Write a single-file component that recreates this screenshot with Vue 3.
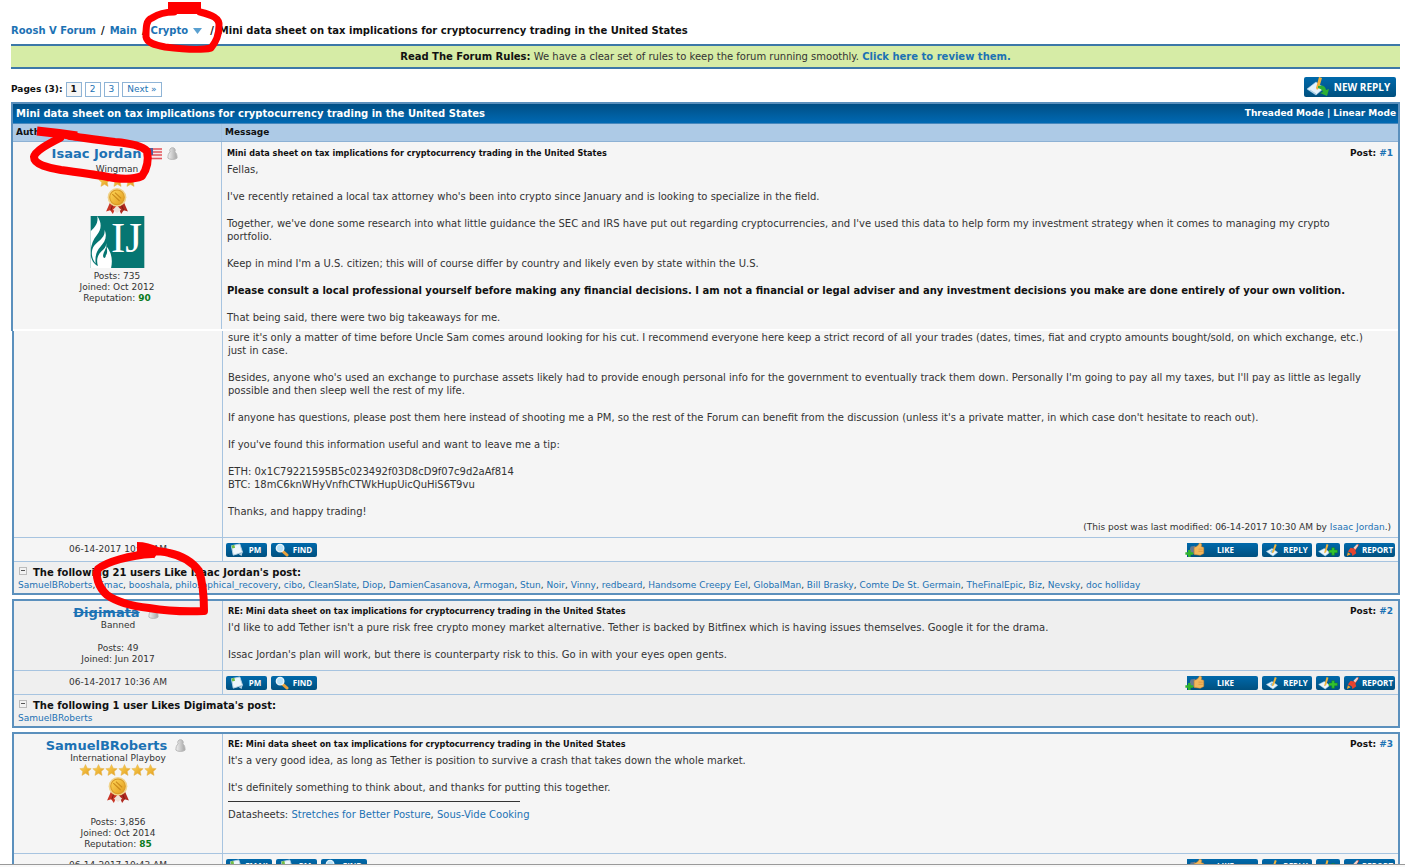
<script setup>
const threadTitle = 'Mini data sheet on tax implications for cryptocurrency trading in the United States'

const openingParagraphs = [
  { text: 'Fellas,' },
  { text: "I've recently retained a local tax attorney who's been into crypto since January and is looking to specialize in the field." },
  { text: "Together, we've done some research into what little guidance the SEC and IRS have put out regarding cryptocurrencies, and I've used this data to help form my investment strategy when it comes to managing my crypto portfolio." },
  { text: "Keep in mind I'm a U.S. citizen; this will of course differ by country and likely even by state within the U.S." },
  { text: 'Please consult a local professional yourself before making any financial decisions. I am not a financial or legal adviser and any investment decisions you make are done entirely of your own volition.', strong: true },
  { text: 'That being said, there were two big takeaways for me.' },
]

const closingParagraphs = [
  "sure it's only a matter of time before Uncle Sam comes around looking for his cut. I recommend everyone here keep a strict record of all your trades (dates, times, fiat and crypto amounts bought/sold, on which exchange, etc.) just in case.",
  "Besides, anyone who's used an exchange to purchase assets likely had to provide enough personal info for the government to eventually track them down. Personally I'm going to pay all my taxes, but I'll pay as little as legally possible and then sleep well the rest of my life.",
  "If anyone has questions, please post them here instead of shooting me a PM, so the rest of the Forum can benefit from the discussion (unless it's a private matter, in which case don't hesitate to reach out).",
  "If you've found this information useful and want to leave me a tip:",
  'ETH: 0x1C79221595B5c023492f03D8cD9f07c9d2aAf814\nBTC: 18mC6knWHyVnfhCTWkHupUicQuHiS6T9vu',
  'Thanks, and happy trading!',
]

const likers = ['SamuelBRoberts', 'Emac', 'booshala', 'philosophical_recovery', 'cibo', 'CleanSlate', 'Diop', 'DamienCasanova', 'Armogan', 'Stun', 'Noir', 'Vinny', 'redbeard', 'Handsome Creepy Eel', 'GlobalMan', 'Bill Brasky', 'Comte De St. Germain', 'TheFinalEpic', 'Biz', 'Nevsky', 'doc holliday']

const contact = [
  { label: 'PM', icon: 'i-note', size: 'w-pm' },
  { label: 'FIND', icon: 'i-find', size: 'w-find' },
]
const contactWithEmail = [{ label: 'EMAIL', icon: 'i-note', size: 'w-find' }, ...contact]
const actions = [
  { label: 'LIKE', icon: 'i-like', size: 'w-like' },
  { label: 'REPLY', icon: 'i-reply', size: 'w-reply' },
  { label: '', icon: 'i-multi', size: 'w-multi' },
  { label: 'REPORT', icon: 'i-report', size: 'w-report' },
]
</script>

<template>
  <div class="page">
    <svg class="defs" aria-hidden="true">
      <defs>
        <linearGradient id="gold" x1="0" y1="0" x2="1" y2="1"><stop offset="0" stop-color="#ffd85a" /><stop offset="1" stop-color="#e09a1c" /></linearGradient>
        <linearGradient id="grey" x1="0" y1="0" x2="1" y2="0"><stop offset="0" stop-color="#f0f0f0" /><stop offset="1" stop-color="#a4a4a4" /></linearGradient>
      </defs>
      <symbol id="i-star" viewBox="0 0 24 24"><path d="M12 1l3.400 7.400 8 .900-6 5.500 1.700 8L12 18.700l-7.100 4.100 1.700-8-6-5.500 8-.900z" fill="url(#gold)" stroke="#e3b04a" stroke-width="1" /></symbol>
      <symbol id="i-medal" viewBox="0 0 44 50">
        <path d="M9 27L1 45l8-2 5 7 7-16z" fill="#c93526" /><path d="M35 27l8 18-8-2-5 7-7-16z" fill="#b02a20" />
        <path d="M14 32l-4 11M30 32l5 11" stroke="#7d1c16" stroke-width="2" />
        <path d="M22 34l-8 8 8 6 8-6z" fill="#efe0d8" />
        <circle cx="22" cy="18" r="18" fill="#f1d38a" /><circle cx="22" cy="18" r="14" fill="url(#gold)" stroke="#d99a25" stroke-width="2" />
        <path d="M13 12l14 13M18 9l12 11" fill="none" stroke="#c98819" stroke-width="2" />
      </symbol>
      <symbol id="i-user" viewBox="0 0 12 14"><path d="M6 .6a3 3 0 0 1 2.500 4.700C10.500 6.500 11 9 11 12c-1.500 2-8.500 2-10 0 0-3 .5-5.500 2.500-6.700A3 3 0 0 1 6 .6z" fill="url(#grey)" stroke="#b5b5b5" /></symbol>
      <symbol id="i-flag" viewBox="0 0 17 12">
        <path d="M0 0h17v12H0z" fill="#f7e9e9" /><path d="M0 1h17M0 4h17M0 7h17M0 10.500h17" stroke="#e2535b" stroke-width="1.500" /><path d="M0 0h8v7H0z" fill="#4e5f9c" />
      </symbol>
      <symbol id="i-note" viewBox="0 0 15 15"><path d="M2 3l9-2 3 9-10 3z" fill="#eef6fb" stroke="#b5d2e3" /><path d="M2 3l3-1 1 3-3 1z" fill="#72bd45" /><path d="M10 12l4-2-1 4z" fill="#b4cfe0" /></symbol>
      <symbol id="i-find" viewBox="0 0 15 15"><path d="M9 9l4.500 4" stroke="#e9a13c" stroke-width="3" stroke-linecap="round" /><circle cx="6" cy="5.500" r="4" fill="#b9e3fa" stroke="#e8f4fa" stroke-width="1.500" /></symbol>
      <symbol id="i-like" viewBox="0 0 22 16">
        <path d="M6 4l5-1v9l-5 1q-2-4 0-9z" fill="#667b91" /><path d="M10 5q5-1 6-5 4 0 2 4l3 1v7l-4 2-7-1z" fill="#f2b75c" stroke="#cf832d" stroke-width=".6" /><path d="M15 7h5M15 9.500h5" stroke="#d58a36" stroke-width=".7" />
        <path d="M3 8h3v2.500h3v3H6V16H3v-2.500H0v-3h3z" fill="#30b52d" />
      </symbol>
      <symbol id="i-reply" viewBox="0 0 15 15"><path d="M1 9l6-3 6 4-5 4z" fill="#e9f5fc" stroke="#a8d2ec" stroke-width=".6" /><path d="M5 9l2 2 2-2-2-2z" fill="#7dbce2" /><path d="M7 10L10 1l2 1-3 8-2 1z" fill="#f3b43c" /></symbol>
      <symbol id="i-multi" viewBox="0 0 22 15"><path d="M1 9l6-3 6 4-5 4z" fill="#e9f5fc" stroke="#a8d2ec" stroke-width=".6" /><path d="M7 10L9.500 1l2 1-2.500 8-2 1z" fill="#f3b43c" /><path d="M15 5h3v2.500h3v3h-3V13h-3v-2.500h-3v-3h3z" fill="#32c22e" stroke="#16851a" stroke-width=".5" /></symbol>
      <symbol id="i-report" viewBox="0 0 15 15"><path d="M2 9l3-4 3 1 5-5 1 1-4 6 1 3-4 3-1-3-2-1z" fill="#e6432e" /><path d="M8 5l4-4 1 2-3 4z" fill="#f5d3c8" /><path d="M1 14l1-4 3 2z" fill="#f5a52c" /></symbol>
      <symbol id="i-newreply" viewBox="0 0 24 20">
        <path d="M1 12l9-7 8 6-8 7z" fill="#e4f2fb" stroke="#a7cfe8" stroke-width=".6" /><path d="M4 13l6 4" stroke="#a2cbe4" /><path d="M10 11L13 0l3 1-3 10-2 2z" fill="#f2b03a" />
        <path d="M12 9q7-2 8 4l3-1-2 7-7-3 3-1q-1-3-5-4z" fill="#2eb034" />
      </symbol>
    </svg>

    <main class="sheet">
      <nav class="crumbs" aria-label="Breadcrumb">
        <a href="#">Roosh V Forum</a><span>/</span><a href="#">Main</a><span>/</span><a href="#">Crypto</a>
        <svg class="arrow" viewBox="0 0 9 6" aria-hidden="true"><path d="M0 0h9L4.500 6z" fill="#5aa0d0" /></svg><span>/</span><span>{{ threadTitle }}</span>
      </nav>

      <p class="rules"><b>Read The Forum Rules:</b> We have a clear set of rules to keep the forum running smoothly. <a href="#"><b>Click here to review them.</b></a></p>

      <div class="toolbar">
        <nav class="pages" aria-label="Pages">
          <b>Pages (3):</b>
          <span class="page-box current">1</span>
          <a class="page-box" href="#">2</a>
          <a class="page-box" href="#">3</a>
          <a class="page-box" href="#">Next »</a>
        </nav>
        <button class="btn new-reply" type="button"><svg aria-hidden="true"><use href="#i-newreply" /></svg><span>NEW REPLY</span></button>
      </div>

      <section class="thread opening">
        <header class="thread-bar">
          <h1>{{ threadTitle }}</h1>
          <div class="modes"><a href="#">Threaded Mode</a> | <a href="#">Linear Mode</a></div>
        </header>
        <div class="cols heads"><div>Author</div><div>Message</div></div>
        <article class="cols first">
          <div class="author">
            <div class="name"><a href="#">Isaac Jordan</a><svg class="flag" aria-hidden="true"><use href="#i-flag" /></svg><svg class="user" aria-hidden="true"><use href="#i-user" /></svg></div>
            <div class="rank low">Wingman</div>
            <div class="stars"><svg v-for="n in 3" :key="n" aria-hidden="true"><use href="#i-star" /></svg></div>
            <svg class="medal" aria-hidden="true"><use href="#i-medal" /></svg>
            <svg class="avatar" viewBox="0 0 163 158" role="img" aria-label="IJ">
              <path d="M0 0h163v158H0z" fill="#067672" />
              <g fill="#fff">
                <path d="M20 0C34 20 34 40 19 58 7 72 3 86 0 102V46C14 34 24 20 20 0z" />
                <path d="M42 42C52 64 42 80 29 94 17 108 13 122 15 144 3 130 0 110 8 94 19 76 46 68 42 42z" />
                <path d="M46 78c6 18-6 28-8 40-2 12 8 12 8 2 6-8 4-18 2-28 14 18 20 38 14 66H0v-38c4 20 14 28 22 32-6-20 0-34 10-44s18-16 14-30z" />
              </g>
              <text x="62" y="110" font-size="130" font-family="Liberation Serif, serif" fill="#fff">IJ</text>
            </svg>
            <div class="stats"><div>Posts: 735</div><div>Joined: Oct 2012</div><div>Reputation: <b class="rep">90</b></div></div>
          </div>
          <div class="message">
            <div class="subject"><h2>{{ threadTitle }}</h2><div>Post: <a href="#">#1</a></div></div>
            <p v-for="p in openingParagraphs" :key="p.text" :class="{ strong: p.strong }">{{ p.text }}</p>
          </div>
        </article>
      </section>

      <section class="thread rest resumed">
        <article class="cols continued">
          <div class="author"></div>
          <div class="message">
            <p v-for="p in closingParagraphs" :key="p">{{ p }}</p>
            <div class="edited">(This post was last modified: 06-14-2017 10:30 AM by <a href="#">Isaac Jordan</a>.)</div>
          </div>
        </article>
        <div class="cols controls">
          <div class="date">06-14-2017 10:24 AM</div>
          <div class="buttons">
            <button v-for="b in contact" :key="b.icon" class="btn" :class="b.size" type="button"><svg aria-hidden="true"><use :href="'#' + b.icon" /></svg><span>{{ b.label }}</span></button>
            <i class="gap"></i>
            <button v-for="b in actions" :key="b.icon" class="btn" :class="b.size" type="button" :aria-label="b.label || 'Quote'"><svg aria-hidden="true"><use :href="'#' + b.icon" /></svg><span>{{ b.label }}</span></button>
          </div>
        </div>
        <div class="likes">
          <div class="likes-title"><button class="fold" type="button" aria-label="Collapse"></button>The following 21 users Like Isaac Jordan's post:</div>
          <div class="likers"><template v-for="(l, i) in likers" :key="l"><a href="#">{{ l }}</a>{{ i < likers.length - 1 ? ', ' : '' }}</template></div>
        </div>
      </section>

      <section class="thread rest alt spaced">
        <article class="cols second">
          <div class="author">
            <div class="name"><a href="#"><s>Digimata</s></a><svg class="user" aria-hidden="true"><use href="#i-user" /></svg></div>
            <div class="rank">Banned</div>
            <div class="stats"><div>Posts: 49</div><div>Joined: Jun 2017</div></div>
          </div>
          <div class="message">
            <div class="subject"><h2>RE: {{ threadTitle }}</h2><div>Post: <a href="#">#2</a></div></div>
            <p>I'd like to add Tether isn't a pure risk free crypto money market alternative. Tether is backed by Bitfinex which is having issues themselves. Google it for the drama.</p>
            <p>Issac Jordan's plan will work, but there is counterparty risk to this. Go in with your eyes open gents.</p>
          </div>
        </article>
        <div class="cols controls">
          <div class="date">06-14-2017 10:36 AM</div>
          <div class="buttons">
            <button v-for="b in contact" :key="b.icon" class="btn" :class="b.size" type="button"><svg aria-hidden="true"><use :href="'#' + b.icon" /></svg><span>{{ b.label }}</span></button>
            <i class="gap"></i>
            <button v-for="b in actions" :key="b.icon" class="btn" :class="b.size" type="button" :aria-label="b.label || 'Quote'"><svg aria-hidden="true"><use :href="'#' + b.icon" /></svg><span>{{ b.label }}</span></button>
          </div>
        </div>
        <div class="likes">
          <div class="likes-title"><button class="fold" type="button" aria-label="Collapse"></button>The following 1 user Likes Digimata's post:</div>
          <div class="likers"><a href="#">SamuelBRoberts</a></div>
        </div>
      </section>

      <section class="thread rest spaced">
        <article class="cols third">
          <div class="author">
            <div class="name"><a href="#">SamuelBRoberts</a><svg class="user" aria-hidden="true"><use href="#i-user" /></svg></div>
            <div class="rank">International Playboy</div>
            <div class="stars"><svg v-for="n in 6" :key="n" aria-hidden="true"><use href="#i-star" /></svg></div>
            <svg class="medal" aria-hidden="true"><use href="#i-medal" /></svg>
            <div class="stats far"><div>Posts: 3,856</div><div>Joined: Oct 2014</div><div>Reputation: <b class="rep">85</b></div></div>
          </div>
          <div class="message">
            <div class="subject"><h2>RE: {{ threadTitle }}</h2><div>Post: <a href="#">#3</a></div></div>
            <p>It's a very good idea, as long as Tether is position to survive a crash that takes down the whole market.</p>
            <p>It's definitely something to think about, and thanks for putting this together.</p>
            <div class="signature">Datasheets: <a href="#">Stretches for Better Posture</a>, <a href="#">Sous-Vide Cooking</a></div>
          </div>
        </article>
        <div class="cols controls">
          <div class="date">06-14-2017 10:43 AM</div>
          <div class="buttons">
            <button v-for="b in contactWithEmail" :key="b.label" class="btn" :class="b.size" type="button"><svg aria-hidden="true"><use :href="'#' + b.icon" /></svg><span>{{ b.label }}</span></button>
            <i class="gap"></i>
            <button v-for="b in actions" :key="b.icon" class="btn" :class="b.size" type="button" :aria-label="b.label || 'Quote'"><svg aria-hidden="true"><use :href="'#' + b.icon" /></svg><span>{{ b.label }}</span></button>
          </div>
        </div>
      </section>

      <svg class="marks" viewBox="0 0 230 630" aria-hidden="true">
        <g fill="none" stroke="#f00" stroke-linecap="round" stroke-linejoin="round">
          <path stroke-width="7" d="M200 12c12 3 20 6 19 14 0 9-3 16-8 22-12 3-30 1-46-1-10-2-18-4-19-10 0-10 0-17 6-19 6-4 14-6 22-6" />
          <path stroke-width="12" stroke-linecap="butt" d="M168 8h33" />
          <path stroke-width="8" d="M60 138c-12 6-25 13-26 19 0 8 16 11 27 13 16 2 28 4 42 6 14 3 30 4 39 0 5-7 7-15 5-25-6-6-19-8-32-9-18-2-30-4-45-6" />
          <path stroke-width="9" stroke-linecap="butt" d="M37 131q20 2 40 5" />
          <path stroke-width="8" d="M152 554c-22 1-46 8-54 15-3 6 0 18 9 26 10 7 24 11 42 13 18 3 33 4 55 3 0-14-1-28-5-40-6-8-15-15-30-18-6-2-14-2-20-2" />
          <path stroke-width="12" stroke-linecap="butt" d="M137 548q10 0 20 5" />
        </g>
      </svg>
    </main>
    <footer class="edge"></footer>
  </div>
</template>

<style>
body { margin: 0; background: #fff; }
</style>

<style scoped>
.page { height: 100vh; display: flex; flex-direction: column; overflow: hidden; font: 10px/13px "DejaVu Sans", Verdana, sans-serif; color: #333; }
.defs { position: absolute; width: 0; height: 0; }
.sheet { position: relative; flex: 1; min-height: 0; overflow: hidden; padding: 0 5px 0 11px; }
.edge { height: 2px; border-top: 1px solid #999; background: #f8f8f8; }
a { color: #1c72b4; text-decoration: none; }
b { color: #111; }
a b { color: inherit; }
.rep { color: #0a7a1c; }
h1, h2, p { margin: 0; }

.crumbs { display: flex; align-items: center; gap: 5px; padding: 24px 0 7px; font-weight: 700; color: #111; }
.arrow { width: 9px; height: 6px; margin-right: 3px; }
.rules { padding: 4px 0; text-align: center; background: #d6eca6; border-top: 2px solid #3c78a8; border-bottom: 2px solid #3c78a8; }

.toolbar { display: flex; justify-content: space-between; align-items: flex-end; padding: 8px 4px 5px 0; }
.pages { display: flex; align-items: center; gap: 3px; font-size: 9px; }
.page-box { padding: 0 4px; border: 1px solid #8fb4d6; background: #fff; }
.page-box.current { font-weight: 700; color: #111; background: #f5f5f5; }

.thread { border: 2px solid #5b90bd; background: #f5f5f5; }
.opening { border-bottom: 0; }
.thread-bar { display: flex; justify-content: space-between; align-items: center; padding: 3px 2px 3px 3px; background: linear-gradient(#004f85, #0069b3); color: #fff; }
.thread-bar a { color: #fff; }
h1 { font-size: 10px; line-height: 13px; }
.modes { font-size: 9px; font-weight: 700; }
.cols { display: grid; grid-template-columns: 208px 1fr; }
.cols > * + * { border-left: 1px solid #a7c4e0; }
.heads { background: #adcae6; border-top: 1px solid #4788bd; border-bottom: 1px solid #8db1d4; font-size: 9px; font-weight: 700; color: #111; }
.heads > div { padding: 2px 3px; }
.author { padding-top: 4px; text-align: center; font-size: 9px; line-height: 11px; }
.name { display: flex; align-items: center; justify-content: center; height: 15px; padding-right: 4px; font-size: 13px; font-weight: 700; }
.flag { width: 17px; height: 12px; margin-left: 4px; }
.user { width: 11px; height: 13px; margin-left: 5px; }
.name a + .user { margin-left: 8px; }
.low { padding-top: 3px; }
.stars { display: flex; justify-content: center; height: 12px; }
.stars svg { width: 13px; height: 12px; }
.medal { display: block; width: 24px; height: 26px; margin: 1px auto 0; }
.avatar { display: block; width: 55px; height: 52px; margin: 2px auto; }
.stats { padding-top: 1px; }
.second .stats { padding-top: 12px; }
.stats.far { padding-top: 14px; }
.message { padding: 5px; }
.rest .message { padding-top: 4px; }
.subject { display: flex; justify-content: space-between; padding-bottom: 3px; font-size: 9px; font-weight: 700; color: #111; }
h2 { font: 700 9px/13px "DejaVu Sans Condensed", "DejaVu Sans", Verdana, sans-serif; }
.message p { padding-right: 18px; white-space: pre-line; }
.message p + p { margin-top: 14px; }
.strong { font-weight: 700; color: #111; }

.rest { margin-left: 1px; }
.first { border-bottom: 2px solid #fff; }
.spaced { margin-top: 4px; }
.resumed { border-top: 0; }
.continued { min-height: 206px; }
.continued .message { padding-top: 0; padding-bottom: 3px; }
.edited { padding: 3px 2px 0; font-size: 9px; text-align: right; }
.alt, .likes { background: #efefef; }
.second { min-height: 69px; }
.third { min-height: 119px; }
.signature { padding-top: 7px; }
.signature::before { content: ""; display: block; width: 292px; margin-bottom: 6px; border-top: 1px solid #333; }

.controls { border-top: 1px solid #a7c4e0; }
.date { padding: 5px 0; text-align: center; font-size: 9px; }
.buttons { display: flex; align-items: center; gap: 4px; padding: 0 3px; }
.gap { flex: 1; }
.btn { display: flex; align-items: center; justify-content: center; gap: 2px; height: 14px; padding: 0 3px; border: 0; border-radius: 2px; background: linear-gradient(#0069ab, #00507f); color: #fff; font: 700 8px/13px "Open Sans", "Noto Sans", sans-serif; }
.btn svg { flex: none; width: 15px; height: 14px; }
.btn span { flex: 1; text-align: center; }
.w-pm { width: 41px; }
.w-find { width: 46px; }
.w-like { width: 74px; padding-left: 0; background: linear-gradient(#0069ab, #00507f) right / 71px 100% no-repeat; }
.w-like svg { width: 22px; }
.w-like span { padding-right: 12px; }
.w-reply { width: 50px; }
.w-multi { width: 24px; padding: 0 1px; }
.w-multi svg { width: 22px; }
.w-multi span { display: none; }
.w-report { width: 51px; padding: 0 2px; }
.w-report svg { width: 14px; }
.new-reply { height: 20px; width: 92px; padding: 0 4px 0 2px; font-size: 10px; }
.new-reply svg { width: 24px; height: 20px; }

.likes { border-top: 1px solid #a7c4e0; padding: 4px 4px 2px; }
.likes-title { display: flex; align-items: center; font-weight: 700; color: #111; }
.fold { position: relative; width: 8px; height: 8px; margin: 0 6px 4px 1px; padding: 0; border: 1px solid #bbb; background: #f2f2f2; }
.fold::after { content: ""; position: absolute; left: 1px; right: 1px; top: 2px; height: 1px; background: #555; }
.likers { font-size: 9px; line-height: 12px; }
.marks { position: absolute; left: 0; top: 0; width: 230px; height: 630px; pointer-events: none; }
</style>
